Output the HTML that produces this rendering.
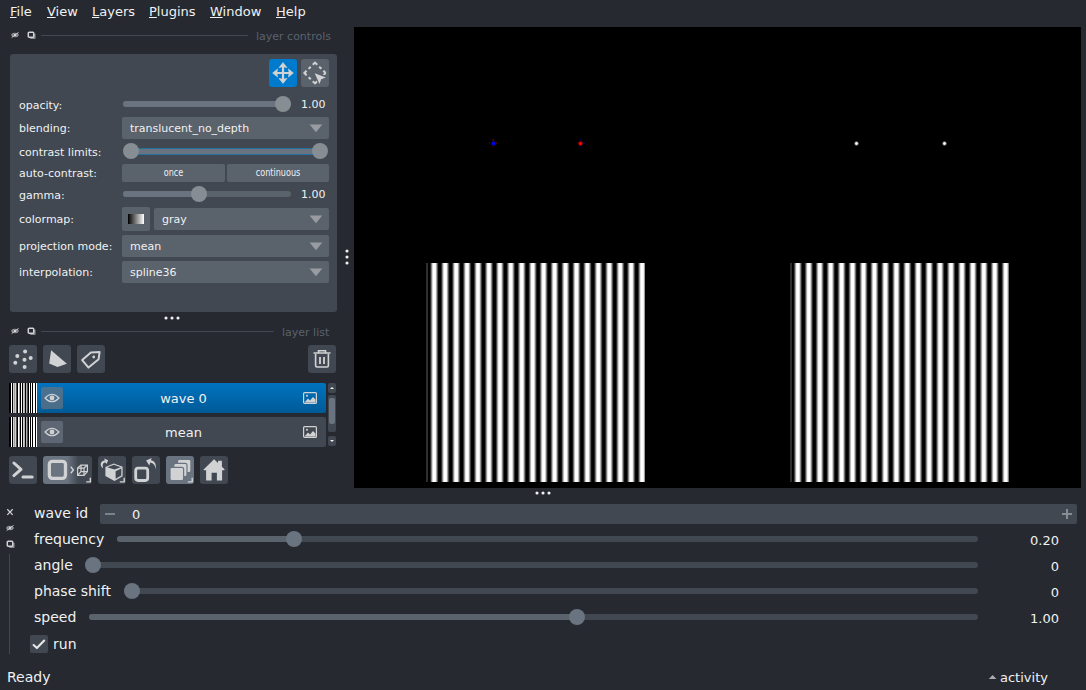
<!DOCTYPE html>
<html lang="en">
<head>
<meta charset="utf-8">
<title>napari</title>
<style>
*{box-sizing:border-box;margin:0;padding:0}
html,body{width:1086px;height:690px;overflow:hidden;background:#262930}
body{position:relative;font-family:"DejaVu Sans","Liberation Sans",sans-serif;color:#f0f1f2;font-size:11px;-webkit-font-smoothing:antialiased}
.a{position:absolute}
.t{position:absolute;white-space:nowrap;line-height:1}
u{text-decoration:underline;text-underline-offset:1px;text-decoration-thickness:1px}
/* menu */
.menu{font-size:13px;top:5px}
/* dock titles */
.dtitle{font-size:11px;color:#5a626c}
.dline{height:1px;background:#414851}
/* panel */
.panel{background:#414851;border-radius:3px}
.lbl{font-size:11px;left:19px}
.combo{background:#5a626c;border-radius:2px;height:22px}
.combo .t{font-size:11px;top:6px;left:8px}
.arrow{position:absolute;right:6px;top:6.5px}
.track{height:6px;border-radius:3px;background:#5a626c}
.fill{height:6px;border-radius:3px;background:#6a7380}
.knob{width:16px;height:16px;border-radius:8px;background:#868e93}
.btn{background:#5a626c;border-radius:2px}
.sq{width:28px;height:28px;background:#414851;border-radius:3px}
.val{font-size:11px}
/* bottom dock */
.blbl{font-size:14px;left:34px}
.bval{font-size:13px;text-align:right;width:60px;left:999px}

.btrack{height:6px;border-radius:3px;background:#414851}
.bfill{height:6px;border-radius:3px;background:#5a626c}
.bknob{width:16px;height:16px;border-radius:8px;background:#6a7380}
</style>
</head>
<body>
<!-- MENU BAR -->
<div class="t menu" style="left:10px"><u>F</u>ile</div>
<div class="t menu" style="left:47px"><u>V</u>iew</div>
<div class="t menu" style="left:92px"><u>L</u>ayers</div>
<div class="t menu" style="left:149px"><u>P</u>lugins</div>
<div class="t menu" style="left:210px"><u>W</u>indow</div>
<div class="t menu" style="left:276px"><u>H</u>elp</div>

<!-- CANVAS -->
<div class="a" id="canvas" style="left:354px;top:27px;width:727px;height:461px;background:#000;overflow:hidden">
<div class="a" style="left:72px;top:236px;width:219px;height:219px;background:repeating-linear-gradient(90deg,#000000 -8.17px,#000000 -7.72px,#000000 -7.26px,#0e0e0e -6.81px,#2f2f2f -6.35px,#565656 -5.89px,#7f7f7f -5.44px,#a9a9a9 -4.98px,#d0d0d0 -4.52px,#f1f1f1 -4.07px,#ffffff -3.61px,#ffffff -3.16px,#ffffff -2.70px,#ffffff -2.24px,#ffffff -1.79px,#f1f1f1 -1.33px,#d0d0d0 -0.87px,#a9a9a9 -0.42px,#7f7f7f 0.04px,#565656 0.49px,#2f2f2f 0.95px,#0e0e0e 1.41px,#000000 1.86px,#000000 2.32px,#000000 2.77px)"><div class="a" style="left:0;top:0;width:2px;height:219px;background:#2e2e2e"></div></div>
<div class="a" style="left:436px;top:236px;width:219px;height:219px;background:repeating-linear-gradient(90deg,#000000 -8.55px,#000000 -8.10px,#000000 -7.64px,#0e0e0e -7.19px,#2f2f2f -6.73px,#565656 -6.27px,#7f7f7f -5.82px,#a9a9a9 -5.36px,#d0d0d0 -4.90px,#f1f1f1 -4.45px,#ffffff -3.99px,#ffffff -3.54px,#ffffff -3.08px,#ffffff -2.62px,#ffffff -2.17px,#f1f1f1 -1.71px,#d0d0d0 -1.25px,#a9a9a9 -0.80px,#7f7f7f -0.34px,#565656 0.11px,#2f2f2f 0.57px,#0e0e0e 1.03px,#000000 1.48px,#000000 1.94px,#000000 2.39px)"><div class="a" style="left:0;top:0;width:2px;height:219px;background:#2e2e2e"></div></div>
<div class="a" style="left:136.5px;top:113.8px;width:5px;height:5px;background:radial-gradient(circle,#0000ff 0,#0000ff 30%,#000 78%)"></div><div class="a" style="left:138.0px;top:112.3px;width:2px;height:1.4px;background:#400000"></div><div class="a" style="left:138.0px;top:118.9px;width:2px;height:1.4px;background:#400000"></div><div class="a" style="left:135.0px;top:115.3px;width:1.4px;height:2px;background:#400000"></div><div class="a" style="left:141.6px;top:115.3px;width:1.4px;height:2px;background:#400000"></div>
<div class="a" style="left:224.1px;top:113.8px;width:5px;height:5px;background:radial-gradient(circle,#ff0000 0,#ff0000 30%,#000 78%)"></div><div class="a" style="left:225.6px;top:112.3px;width:2px;height:1.4px;background:#000048"></div><div class="a" style="left:225.6px;top:118.9px;width:2px;height:1.4px;background:#000048"></div><div class="a" style="left:222.6px;top:115.3px;width:1.4px;height:2px;background:#000048"></div><div class="a" style="left:229.2px;top:115.3px;width:1.4px;height:2px;background:#000048"></div>
<div class="a" style="left:499.9px;top:113.8px;width:5px;height:5px;background:radial-gradient(circle,#ffffff 0,#ffffff 22%,#000 72%)"></div>
<div class="a" style="left:587.6px;top:113.8px;width:5px;height:5px;background:radial-gradient(circle,#ffffff 0,#ffffff 22%,#000 72%)"></div>
</div>

<!-- LAYER CONTROLS DOCK -->
<div id="lc">

<!-- title bar -->
<svg class="a" style="left:10px;top:31px" width="10" height="8" viewBox="0 0 10 8"><ellipse cx="5" cy="4" rx="3.4" ry="1.8" fill="#d1d2d4" fill-opacity="0.45" stroke="#d1d2d4" stroke-opacity="0.7" stroke-width="0.8"/><circle cx="5" cy="4" r="1.1" fill="#eeeeee"/><path d="M1.6 6.6 L8.6 1.4" stroke="#d1d2d4" stroke-width="0.9"/></svg>
<svg class="a" style="left:27px;top:31px" width="10" height="9" viewBox="0 0 10 9"><path d="M3.2 7.3 H7.9 V2.8" fill="none" stroke="#a4a6a9" stroke-width="1.1"/><rect x="1.3" y="1.3" width="5.4" height="5" rx="0.8" fill="none" stroke="#d1d2d4" stroke-width="1.5"/></svg>
<div class="a dline" style="left:41px;top:35px;width:207px"></div>
<div class="t dtitle" style="left:256px;top:31px">layer controls</div>
<!-- panel -->
<div class="a panel" style="left:10px;top:54px;width:327px;height:258px"></div>
<div class="a sq" style="left:269px;top:59px;background:#007acc">
<svg width="28" height="28" viewBox="0 0 28 28"><path d="M12.9 7 H15.1 V12.9 H21 V15.1 H15.1 V21 H12.9 V15.1 H7 V12.9 H12.9 Z" fill="#d1d2d4"/><path d="M14 3.6 L18 8.6 L14 7.8 L10 8.6 Z M14 24.4 L18 19.4 L14 20.2 L10 19.4 Z M3.6 14 L8.6 10 L7.8 14 L8.6 18 Z M24.4 14 L19.4 10 L20.2 14 L19.4 18 Z" fill="#d1d2d4" stroke="#d1d2d4" stroke-width="0.6" stroke-linejoin="round"/></svg>
</div>
<div class="a sq" style="left:301px;top:59px;background:#5a626c">
<svg width="28" height="28" viewBox="0 0 28 28"><path d="M14 3.6 L24.6 14 L14 24.4 L3.4 14 Z" fill="none" stroke="#d1d2d4" stroke-width="2" stroke-dasharray="3.1 2.8 3 2.8 3.15 0" stroke-linejoin="miter"/><path d="M12.5 13 L27 17 L18 27 Z" fill="#5a626c"/><path d="M13.7 14.2 L24.8 18.4 L20.2 20.3 L18.5 25 Z" fill="#d1d2d4"/></svg>
</div>
<!-- opacity -->
<div class="t lbl" style="top:100px">opacity:</div>
<div class="a fill" style="left:123px;top:101px;width:168px"></div>
<div class="a knob" style="left:275px;top:96px"></div>
<div class="t val" style="left:301px;top:99px">1.00</div>
<!-- blending -->
<div class="t lbl" style="top:123px">blending:</div>
<div class="a combo" style="left:122px;top:117px;width:207px"><div class="t">translucent_no_depth</div><svg class="arrow" width="14" height="9" viewBox="0 0 14 9"><path d="M0.6 0.4 H13.3 L6.95 8.3 Z" fill="#989ca2"/></svg></div>
<!-- contrast limits -->
<div class="t lbl" style="top:147px">contrast limits:</div>
<div class="a" style="left:131px;top:148px;width:189px;height:7px;background:#6a7380;border-top:1px solid #236f9e;border-bottom:1px solid #236f9e"></div>
<div class="a knob" style="left:123px;top:143px"></div>
<div class="a knob" style="left:312px;top:143px"></div>
<!-- auto-contrast -->
<div class="t lbl" style="top:168px">auto-contrast:</div>
<div class="a btn" style="left:122px;top:164px;width:103px;height:18px"><div class="t" style="font-size:10px;left:0;width:103px;text-align:center;top:4px;transform:scaleX(.81)">once</div></div>
<div class="a btn" style="left:227px;top:164px;width:102px;height:18px"><div class="t" style="font-size:10px;left:0;width:102px;text-align:center;top:4px;transform:scaleX(.81)">continuous</div></div>
<!-- gamma -->
<div class="t lbl" style="top:190px">gamma:</div>
<div class="a track" style="left:123px;top:191px;width:168px"></div>
<div class="a fill" style="left:123px;top:191px;width:80px"></div>
<div class="a knob" style="left:191px;top:186px"></div>
<div class="t val" style="left:301px;top:189px">1.00</div>
<!-- colormap -->
<div class="t lbl" style="top:214px">colormap:</div>
<div class="a btn" style="left:122px;top:207px;width:28px;height:24px"><div class="a" style="left:6px;top:7px;width:16px;height:10px;background:linear-gradient(90deg,#000,#fff)"></div></div>
<div class="a combo" style="left:154px;top:208px;width:175px"><div class="t">gray</div><svg class="arrow" width="14" height="9" viewBox="0 0 14 9"><path d="M0.6 0.4 H13.3 L6.95 8.3 Z" fill="#989ca2"/></svg></div>
<!-- projection mode -->
<div class="t lbl" style="top:241px">projection mode:</div>
<div class="a combo" style="left:122px;top:235px;width:207px"><div class="t">mean</div><svg class="arrow" width="14" height="9" viewBox="0 0 14 9"><path d="M0.6 0.4 H13.3 L6.95 8.3 Z" fill="#989ca2"/></svg></div>
<!-- interpolation -->
<div class="t lbl" style="top:267px">interpolation:</div>
<div class="a combo" style="left:122px;top:261px;width:207px"><div class="t">spline36</div><svg class="arrow" width="14" height="9" viewBox="0 0 14 9"><path d="M0.6 0.4 H13.3 L6.95 8.3 Z" fill="#989ca2"/></svg></div>
<!-- splitter dots -->
<svg class="a" style="left:163px;top:315px" width="18" height="6" viewBox="0 0 18 6"><circle cx="3" cy="3" r="1.55" fill="#f0f1f2"/><circle cx="9" cy="3" r="1.55" fill="#f0f1f2"/><circle cx="15" cy="3" r="1.55" fill="#f0f1f2"/></svg>

</div>

<!-- LAYER LIST DOCK -->
<div id="ll">

<svg class="a" style="left:10px;top:327px" width="10" height="8" viewBox="0 0 10 8"><ellipse cx="5" cy="4" rx="3.4" ry="1.8" fill="#d1d2d4" fill-opacity="0.45" stroke="#d1d2d4" stroke-opacity="0.7" stroke-width="0.8"/><circle cx="5" cy="4" r="1.1" fill="#eeeeee"/><path d="M1.6 6.6 L8.6 1.4" stroke="#d1d2d4" stroke-width="0.9"/></svg>
<svg class="a" style="left:27px;top:327px" width="10" height="9" viewBox="0 0 10 9"><path d="M3.2 7.3 H7.9 V2.8" fill="none" stroke="#a4a6a9" stroke-width="1.1"/><rect x="1.3" y="1.3" width="5.4" height="5" rx="0.8" fill="none" stroke="#d1d2d4" stroke-width="1.5"/></svg>
<div class="a dline" style="left:41px;top:331px;width:233px"></div>
<div class="t dtitle" style="left:282px;top:327px">layer list</div>
<!-- new-layer buttons -->
<div class="a sq" style="left:9px;top:345px"><svg width="28" height="28" viewBox="0 0 28 28" fill="#d1d2d4"><circle cx="16.1" cy="6.6" r="2"/><circle cx="8.3" cy="11" r="2"/><circle cx="21.7" cy="13" r="2"/><circle cx="15.5" cy="14.8" r="2"/><circle cx="6.3" cy="17.7" r="2"/><circle cx="15.6" cy="21.9" r="2"/></svg></div>
<div class="a sq" style="left:43px;top:345px"><svg width="28" height="28" viewBox="0 0 28 28"><path d="M8.1 5.2 L23.9 18.8 L14.5 22.1 L6.2 18.5 Z" fill="#d1d2d4"/></svg></div>
<div class="a sq" style="left:77px;top:345px"><svg width="28" height="28" viewBox="0 0 28 28"><path d="M13.9 7.6 L22.6 7 L21.6 14.2 L11.5 22.6 L5.2 15.1 Z" fill="none" stroke="#d1d2d4" stroke-width="2" stroke-linejoin="round"/><circle cx="16.7" cy="12" r="1.4" fill="#d1d2d4"/></svg></div>
<div class="a sq" style="left:308px;top:345px"><svg width="28" height="28" viewBox="0 0 28 28"><path d="M5.5 8 H22.5 M10.5 7.5 V5.8 H17.5 V7.5" fill="none" stroke="#d1d2d4" stroke-width="1.6"/><path d="M7.6 9 V20.5 Q7.6 22 9 22 H19 Q20.4 22 20.4 20.5 V9" fill="none" stroke="#d1d2d4" stroke-width="1.6"/><path d="M12 12 V19 M16 12 V19" stroke="#d1d2d4" stroke-width="1.8"/></svg></div>
<!-- row 1 -->
<div class="a" style="left:9px;top:383px;width:317px;height:30px;border-radius:2px;background:linear-gradient(180deg,#0073c0,#005a96)"></div>
<svg class="a" style="left:9px;top:383px" width="28" height="30" viewBox="0 0 28 30" shape-rendering="crispEdges"><rect width="28" height="30" fill="#000"/><rect x="2" y="0" width="1" height="30" fill="#fff"/><rect x="4" y="0" width="1" height="30" fill="#d0d0d0"/><rect x="5" y="0" width="1" height="30" fill="#a0a0a0"/><rect x="6" y="0" width="1" height="30" fill="#d0d0d0"/><rect x="7" y="0" width="1" height="30" fill="#505050"/><rect x="9" y="0" width="1" height="30" fill="#fff"/><rect x="10" y="0" width="1" height="30" fill="#b0b0b0"/><rect x="12" y="0" width="1" height="30" fill="#fff"/><rect x="14" y="0" width="1" height="30" fill="#d0d0d0"/><rect x="15" y="0" width="1" height="30" fill="#b0b0b0"/><rect x="17" y="0" width="1" height="30" fill="#b0b0b0"/><rect x="18" y="0" width="1" height="30" fill="#505050"/><rect x="20" y="0" width="1" height="30" fill="#fff"/><rect x="22" y="0" width="1" height="30" fill="#fff"/><rect x="24" y="0" width="1" height="30" fill="#fff"/><rect x="25" y="0" width="1" height="30" fill="#fff"/><rect x="27" y="0" width="1" height="30" fill="#fff"/></svg>
<div class="a" style="left:41px;top:387px;width:22px;height:22px;border-radius:2px;background:rgba(106,115,128,0.7)"><svg width="22" height="22" viewBox="0 0 22 22"><path d="M4 11 Q11 3.5 18 11 Q11 18.5 4 11 Z" fill="none" stroke="#d1d2d4" stroke-width="1.1"/><circle cx="11" cy="11" r="2.4" fill="#cfd0d2"/></svg></div>
<div class="t" style="left:69px;width:229px;text-align:center;top:392px;font-size:13px">wave 0</div>
<div class="a" style="left:303px;top:392px;width:14px;height:12px"><svg width="14" height="12" viewBox="0 0 14 12"><rect x="0.6" y="0.6" width="12.8" height="10.8" rx="1" fill="none" stroke="#d1d2d4" stroke-width="1.2"/><circle cx="4" cy="3.8" r="1" fill="#d1d2d4"/><path d="M1.5 10.5 L5 6.5 L7 8.5 L10 5 L12.5 7.5 V10.5 Z" fill="#d1d2d4"/></svg></div>
<!-- row 2 -->
<div class="a" style="left:9px;top:417px;width:317px;height:30px;border-radius:2px;background:#414851"></div>
<svg class="a" style="left:9px;top:417px" width="28" height="30" viewBox="0 0 28 30" shape-rendering="crispEdges"><rect width="28" height="30" fill="#000"/><rect x="2" y="0" width="1" height="30" fill="#fff"/><rect x="4" y="0" width="1" height="30" fill="#d0d0d0"/><rect x="5" y="0" width="1" height="30" fill="#a0a0a0"/><rect x="6" y="0" width="1" height="30" fill="#d0d0d0"/><rect x="7" y="0" width="1" height="30" fill="#505050"/><rect x="9" y="0" width="1" height="30" fill="#fff"/><rect x="10" y="0" width="1" height="30" fill="#b0b0b0"/><rect x="12" y="0" width="1" height="30" fill="#fff"/><rect x="14" y="0" width="1" height="30" fill="#d0d0d0"/><rect x="15" y="0" width="1" height="30" fill="#b0b0b0"/><rect x="17" y="0" width="1" height="30" fill="#b0b0b0"/><rect x="18" y="0" width="1" height="30" fill="#505050"/><rect x="20" y="0" width="1" height="30" fill="#fff"/><rect x="22" y="0" width="1" height="30" fill="#fff"/><rect x="24" y="0" width="1" height="30" fill="#fff"/><rect x="25" y="0" width="1" height="30" fill="#fff"/><rect x="27" y="0" width="1" height="30" fill="#fff"/></svg>
<div class="a" style="left:41px;top:421px;width:22px;height:22px;border-radius:2px;background:rgba(106,115,128,0.7)"><svg width="22" height="22" viewBox="0 0 22 22"><path d="M4 11 Q11 3.5 18 11 Q11 18.5 4 11 Z" fill="none" stroke="#d1d2d4" stroke-width="1.1"/><circle cx="11" cy="11" r="2.4" fill="#cfd0d2"/></svg></div>
<div class="t" style="left:69px;width:229px;text-align:center;top:426px;font-size:13px">mean</div>
<div class="a" style="left:303px;top:426px;width:14px;height:12px"><svg width="14" height="12" viewBox="0 0 14 12"><rect x="0.6" y="0.6" width="12.8" height="10.8" rx="1" fill="none" stroke="#d1d2d4" stroke-width="1.2"/><circle cx="4" cy="3.8" r="1" fill="#d1d2d4"/><path d="M1.5 10.5 L5 6.5 L7 8.5 L10 5 L12.5 7.5 V10.5 Z" fill="#d1d2d4"/></svg></div>
<!-- scrollbar -->
<div class="a" style="left:328px;top:383px;width:8px;height:10px;background:#414851;border-radius:2px"></div>
<div class="a" style="left:330px;top:387px;width:0;height:0;border-left:2px solid transparent;border-right:2px solid transparent;border-bottom:2.5px solid #f0f1f2"></div>
<div class="a" style="left:328px;top:395px;width:8px;height:37px;background:#414851;border-radius:2px"></div>
<div class="a" style="left:329px;top:398px;width:6px;height:26px;background:#6a7380;border-radius:2px"></div>
<div class="a" style="left:328px;top:436px;width:8px;height:10px;background:#414851;border-radius:2px"></div>
<div class="a" style="left:330px;top:440px;width:0;height:0;border-left:2px solid transparent;border-right:2px solid transparent;border-top:2.5px solid #f0f1f2"></div>
<!-- viewer buttons -->
<div class="a sq" style="left:9px;top:456px"><svg width="28" height="28" viewBox="0 0 28 28"><path d="M4.9 7 L12 13.4 L4.9 19.6 M14 20.9 H23.2" fill="none" stroke="#d1d2d4" stroke-width="3" stroke-linecap="round" stroke-linejoin="round"/></svg></div>
<div class="a sq" style="left:43px;top:456px;width:49px;background:linear-gradient(90deg,#6a7380 0,#6a7380 50%,#414851 72%,#414851 100%)"><svg width="49" height="28" viewBox="0 0 49 28"><rect x="6.35" y="5.35" width="16.1" height="17" rx="3" fill="none" stroke="#d1d2d4" stroke-width="3.3"/><path d="M27.8 10.8 L30.4 14 L27.8 17.2" fill="none" stroke="#d1d2d4" stroke-width="1.4"/><g fill="none" stroke="#d1d2d4" stroke-width="1.25" stroke-linejoin="round"><path d="M34.6 12 L38 9 H44.4 V15.6 L41 19.4 H34.6 Z"/><path d="M34.6 12 H41 V19.4 M41 12 L44.4 9 M38 9 V15.6 H44.4 M38 15.6 L34.6 19.4"/></g><path d="M43.2 25.9 H47.3 V21.8" fill="none" stroke="#d1d2d4" stroke-width="1.4"/></svg></div>
<div class="a sq" style="left:98px;top:456px"><svg width="28" height="28" viewBox="0 0 28 28"><path d="M15.8 7.4 L24.6 10.8 V20.2 L16.5 24.9 L7.4 19.9 V11.1 Z" fill="#d1d2d4"/><path d="M15.9 8.7 L22.8 11.2 L16.5 13.6 L9.2 11.2 Z" fill="#414851"/><path d="M17.6 15.2 L23.3 12.6 V19.5 L17.6 22.8 Z" fill="#414851"/><path d="M4.3 12 C1.2 8.5 3 4.6 6.9 4.6 L6.1 2.6 L10.2 4.3 L8.3 8.2 L7.6 6.6 C5 6.6 4.2 8.8 5 11.4 Z" fill="#d1d2d4"/><path d="M21.8 25.9 H26.2 V21.8" fill="none" stroke="#d1d2d4" stroke-width="1.4"/></svg></div>
<div class="a sq" style="left:132px;top:456px"><svg width="28" height="28" viewBox="0 0 28 28"><rect x="3.7" y="12.2" width="12" height="12.3" rx="2.4" fill="none" stroke="#d1d2d4" stroke-width="2.8"/><path d="M23.7 13.4 C23.6 9.5 21.5 7.2 18.3 6.6 L17.3 9.6 L14.1 4.6 L19.7 2 L19 4.2 C23 5 24.6 8.6 23.7 13.4 Z" fill="#d1d2d4"/></svg></div>
<div class="a sq" style="left:166px;top:456px;background:#6a7380"><svg width="28" height="28" viewBox="0 0 28 28"><rect x="12.1" y="3.9" width="12.2" height="12.2" rx="1.3" fill="#d1d2d4"/><rect x="7.8" y="7.4" width="13.2" height="13.2" rx="1.8" fill="#d1d2d4" stroke="#6a7380" stroke-width="1.2"/><rect x="4" y="11.3" width="13.6" height="13.3" rx="1.8" fill="#d1d2d4" stroke="#6a7380" stroke-width="1.2"/><path d="M21.8 25.9 H26.2 V21.8" fill="none" stroke="#d1d2d4" stroke-width="1.4"/></svg></div>
<div class="a sq" style="left:200px;top:456px"><svg width="28" height="28" viewBox="0 0 28 28"><path d="M14.1 3.2 L18 7 V5.3 Q18 4.8 18.5 4.8 H21.4 Q21.9 4.8 21.9 5.3 V10.8 L24.5 13.3 Q24.9 14.2 24 14.2 H22.1 V24 Q22.1 24.6 21.5 24.6 H16.9 V16.8 H11.6 V24.6 H6.7 Q6.1 24.6 6.1 24 V14.2 H4 Q3.2 14.1 3.6 13.4 Z" fill="#d1d2d4"/></svg></div>
<!-- vertical splitter dots -->
<svg class="a" style="left:343.9px;top:248px" width="6" height="18" viewBox="0 0 6 18"><circle cx="3" cy="3" r="1.55" fill="#f0f1f2"/><circle cx="3" cy="9" r="1.55" fill="#f0f1f2"/><circle cx="3" cy="15" r="1.55" fill="#f0f1f2"/></svg>

</div>

<!-- BOTTOM DOCK -->
<div id="bd">

<!-- horizontal splitter dots -->
<svg class="a" style="left:534px;top:490px" width="18" height="6" viewBox="0 0 18 6"><circle cx="3" cy="3" r="1.55" fill="#f0f1f2"/><circle cx="9" cy="3" r="1.55" fill="#f0f1f2"/><circle cx="15" cy="3" r="1.55" fill="#f0f1f2"/></svg>
<!-- vertical title bar -->
<svg class="a" style="left:6px;top:508px" width="8" height="8" viewBox="0 0 8 8"><path d="M1.3 1.3 L6.7 6.9 M6.7 1.3 L1.3 6.9" stroke="#d1d2d4" stroke-width="1.25"/></svg>
<svg class="a" style="left:5px;top:524px" width="10" height="8" viewBox="0 0 10 8"><ellipse cx="5" cy="4" rx="3.4" ry="1.8" fill="#d1d2d4" fill-opacity="0.45" stroke="#d1d2d4" stroke-opacity="0.7" stroke-width="0.8"/><circle cx="5" cy="4" r="1.1" fill="#eeeeee"/><path d="M1.6 6.6 L8.6 1.4" stroke="#d1d2d4" stroke-width="0.9"/></svg>
<svg class="a" style="left:5.5px;top:540px" width="10" height="9" viewBox="0 0 10 9"><path d="M3.2 7.3 H7.9 V2.8" fill="none" stroke="#a4a6a9" stroke-width="1.1"/><rect x="1.3" y="1.3" width="5.4" height="5" rx="0.8" fill="none" stroke="#d1d2d4" stroke-width="1.5"/></svg>
<div class="a" style="left:9px;top:554px;width:1px;height:100px;background:#414851"></div>
<!-- wave id -->
<div class="t blbl" style="top:506px">wave id</div>
<div class="a" style="left:100px;top:504px;width:977px;height:20px;background:#414851;border-radius:2px"></div>
<div class="a" style="left:105px;top:513px;width:10px;height:2px;background:#868e93;opacity:.85"></div>
<div class="a" style="left:1062px;top:513.3px;width:10px;height:1.4px;background:#868e93"></div>
<div class="a" style="left:1066.3px;top:509px;width:1.4px;height:10px;background:#868e93"></div>
<div class="t" style="left:132px;top:508px;font-size:13px">0</div>
<!-- frequency -->
<div class="t blbl" style="top:532px">frequency</div>
<div class="a btrack" style="left:117px;top:536px;width:861px"></div><div class="a bfill" style="left:117px;top:536px;width:177px"></div><div class="a bknob" style="left:286px;top:531px"></div>
<div class="t bval" style="top:534px">0.20</div>
<!-- angle -->
<div class="t blbl" style="top:558px">angle</div>
<div class="a btrack" style="left:85px;top:562px;width:893px"></div><div class="a bknob" style="left:85px;top:557px"></div>
<div class="t bval" style="top:560px">0</div>
<!-- phase shift -->
<div class="t blbl" style="top:584px">phase shift</div>
<div class="a btrack" style="left:124px;top:588px;width:854px"></div><div class="a bknob" style="left:124px;top:583px"></div>
<div class="t bval" style="top:586px">0</div>
<!-- speed -->
<div class="t blbl" style="top:610px">speed</div>
<div class="a btrack" style="left:89px;top:614px;width:889px"></div><div class="a bfill" style="left:89px;top:614px;width:488px"></div><div class="a bknob" style="left:569px;top:609px"></div>
<div class="t bval" style="top:612px">1.00</div>
<!-- run -->
<div class="a" style="left:30px;top:635px;width:18px;height:18px;background:#414851;border-radius:2px"><svg width="18" height="18" viewBox="0 0 18 18"><path d="M3.6 10 L6.9 13.1 L14.2 5.5" fill="none" stroke="#e6e7e8" stroke-width="2.1" stroke-linecap="round" stroke-linejoin="round"/></svg></div>
<div class="t" style="left:53px;top:637px;font-size:14px">run</div>

</div>

<!-- STATUS BAR -->
<div id="sb">

<div class="t" style="left:7px;top:670px;font-size:14px">Ready</div>
<svg class="a" style="left:988px;top:674px" width="10" height="6" viewBox="0 0 10 6"><path d="M0.8 5 L4.6 1 L8.4 5 Z" fill="#a9abae"/></svg>
<div class="t" style="left:1000px;top:671px;font-size:13px">activity</div>

</div>
</body>
</html>
